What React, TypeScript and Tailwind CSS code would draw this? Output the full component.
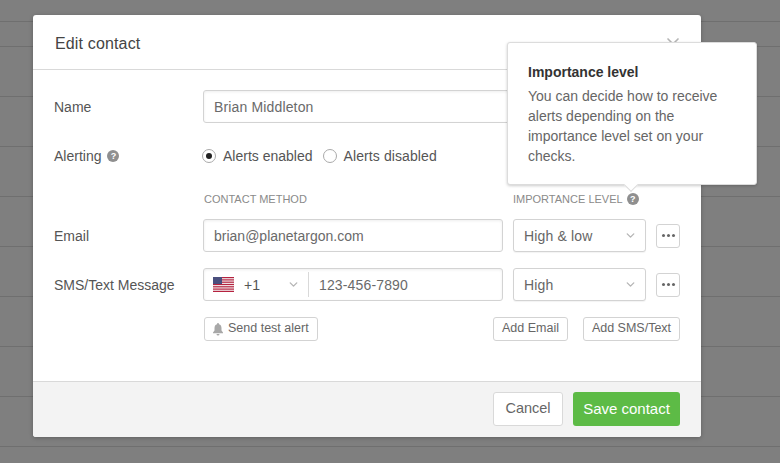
import React from 'react';
import { ChevronDown, X } from 'lucide-react';

const bgRows = [22, 25, 50, 50, 50, 50, 50, 50, 50, 50];

const Help = () => (
  <span className="inline-flex w-[12px] h-[12px] rounded-full bg-[#8f8f8f] text-white text-[9px] font-bold items-center justify-center leading-none">?</span>
);

const inputCls = 'h-[33px] rounded-[3px] border border-[#d3d3d3] bg-white shadow-[inset_0_1px_3px_rgba(0,0,0,0.07)] flex items-center text-[14px] text-[#6a6a6a]';

const Select = ({ value }: { value: string }) => (
  <div className="w-[133px] h-[33px] rounded-[3px] border border-[#d3d3d3] bg-white shadow-[0_1px_1px_rgba(0,0,0,0.05)] flex items-center justify-between pl-[10px] pr-[8px] text-[14px] text-[#666]">
    <span className="pt-[2px] tracking-[0.15px]">{value}</span>
    <ChevronDown size={13} strokeWidth={2.5} className="text-[#b5b5b5]" />
  </div>
);

const Dots = () => (
  <button className="w-[24px] h-[24px] ml-[10px] rounded-[3px] border border-[#d3d3d3] bg-white flex items-center justify-center gap-[2px]">
    <span className="w-[3px] h-[3px] rounded-full bg-[#666]" />
    <span className="w-[3px] h-[3px] rounded-full bg-[#666]" />
    <span className="w-[3px] h-[3px] rounded-full bg-[#666]" />
  </button>
);

const Flag = () => (
  <svg width="21" height="15" viewBox="0 0 21 15">
    <rect x="0" y="0" width="21" height="15" fill="#f4f4f4" />
    {[0, 1, 2, 3, 4, 5, 6].map((i) => (
      <rect key={i} x="0" y={i * 2.3} width="21" height="1.2" fill="#b5223f" />
    ))}
    <rect x="0" y="0" width="9" height="7" fill="#4a4f7e" />
  </svg>
);

const SmallBtn = ({ children, className = '' }: { children: React.ReactNode; className?: string }) => (
  <button className={`h-[24px] pb-[2px] rounded-[3px] border border-[#d3d3d3] bg-white text-[12.5px] text-[#666] flex items-center ${className}`}>
    {children}
  </button>
);

export default function App() {
  return (
    <div className="relative w-[780px] h-[463px] overflow-hidden bg-[#7f7f7f] font-['Liberation_Sans',Arial,sans-serif]">
      {bgRows.map((h, i) => (
        <div key={i} style={{ height: h }} className="border-b border-[#6f6f6f]" />
      ))}

      <div className="absolute left-[33px] top-[15px] w-[668px] h-[422px] rounded-[3px] bg-white shadow-[0_1px_4px_rgba(0,0,0,0.25)] flex flex-col overflow-hidden">
        <div className="h-[55px] shrink-0 border-b border-[#d9d9d9] flex items-center justify-between pt-[3px] pl-[22px] pr-[18px] text-[16px] tracking-[0.15px] text-[#444]">
          <span>Edit contact</span>
          <X size={20} className="text-[#b5b5b5]" />
        </div>

        <div className="flex-1 pl-[21px] pr-[21px] pt-[20px] text-[14px] text-[#555]">
          <div className="flex items-center">
            <span className="w-[149px] pt-[2px]">Name</span>
            <div className={`${inputCls} flex-1 pl-[10px]`}><span className="pt-[2px] tracking-[0.15px]">Brian Middleton</span></div>
          </div>

          <div className="flex items-center h-[20px] mt-[23px]">
            <span className="w-[149px] flex items-center gap-[6px]">Alerting <Help /></span>
            <span className="w-[14px] h-[14px] -ml-[1px] rounded-full border border-[#aaa] flex items-center justify-center">
              <span className="w-[6px] h-[6px] rounded-full bg-[#222]" />
            </span>
            <span className="ml-[7px]">Alerts enabled</span>
            <span className="w-[14px] h-[14px] ml-[10px] rounded-full border border-[#aaa]" />
            <span className="ml-[7px] tracking-[0.1px]">Alerts disabled</span>
          </div>

          <div className="flex items-center h-[14px] mt-[26px] pl-[150px] text-[11px] text-[#8a8a8a]">
            <span className="w-[309px]">CONTACT METHOD</span>
            <span className="flex items-center gap-[4px]">IMPORTANCE LEVEL <Help /></span>
          </div>

          <div className="flex items-center mt-[13px]">
            <span className="w-[149px] pt-[2px]">Email</span>
            <div className={`${inputCls} w-[300px] pl-[10px] mr-[10px]`}><span className="pt-[2px]">brian@planetargon.com</span></div>
            <Select value="High & low" />
            <Dots />
          </div>

          <div className="flex items-center mt-[16px]">
            <span className="w-[149px] pt-[2px]">SMS/Text Message</span>
            <div className={`${inputCls} w-[300px] mr-[10px]`}>
              <div className="w-[105px] h-[25px] pl-[9px] pr-[8px] flex items-center border-r border-[#d9d9d9]">
                <Flag />
                <span className="ml-[10px] flex-1 pt-[2px] text-[#555]">+1</span>
                <ChevronDown size={13} strokeWidth={2.5} className="text-[#b5b5b5]" />
              </div>
              <span className="pl-[10px] pt-[2px] tracking-[0.15px]">123-456-7890</span>
            </div>
            <Select value="High" />
            <Dots />
          </div>

          <div className="flex items-center mt-[16px] pl-[150px]">
            <SmallBtn className="w-[114px] pl-[7px] gap-[4px]">
              <svg width="12" height="14" viewBox="0 0 24 26" fill="#a8a8a8" className="mt-[2px]">
                <path d="M12 1a2 2 0 0 0-2 2v.6C6.6 4.5 5 7.4 5 11v5l-3 4v1.5h20V20l-3-4v-5c0-3.600-1.600-6.500-5-7.400V3a2 2 0 0 0-2-2zM9 23a3 3 0 0 0 6 0z" />
              </svg>
              Send test alert
            </SmallBtn>
            <SmallBtn className="w-[75px] ml-[175px] justify-center">Add Email</SmallBtn>
            <SmallBtn className="w-[97px] ml-[15px] justify-center">Add SMS/Text</SmallBtn>
          </div>
        </div>

        <div className="h-[56px] shrink-0 border-t border-[#d9d9d9] bg-[#f3f3f3] flex items-center justify-end gap-[10px] pr-[21px] pb-[1px]">
          <button className="w-[70px] h-[34px] rounded-[3px] border border-[#d9d9d9] bg-white text-[14.5px] text-[#666]">Cancel</button>
          <button className="w-[107px] h-[34px] rounded-[3px] bg-[#5dbb46] text-[15px] text-white">Save contact</button>
        </div>
      </div>

      <div className="absolute left-[507px] top-[42px] w-[250px] h-[143px] rounded-[3px] border border-[#dcdcdc] bg-white shadow-[0_1px_3px_rgba(0,0,0,0.2)] pl-[20px] pr-[20px] pt-[20px]">
        <div className="text-[14px] font-bold text-[#333] leading-[18px]">Importance level</div>
        <div className="mt-[5px] text-[14px] text-[#666] leading-[20px]">
          You can decide how to receive alerts depending on the importance level set on your checks.
        </div>
        <span className="absolute left-[118px] bottom-[-6px] w-[10px] h-[10px] rotate-45 bg-white border-r border-b border-[#dcdcdc]" />
      </div>
    </div>
  );
}
